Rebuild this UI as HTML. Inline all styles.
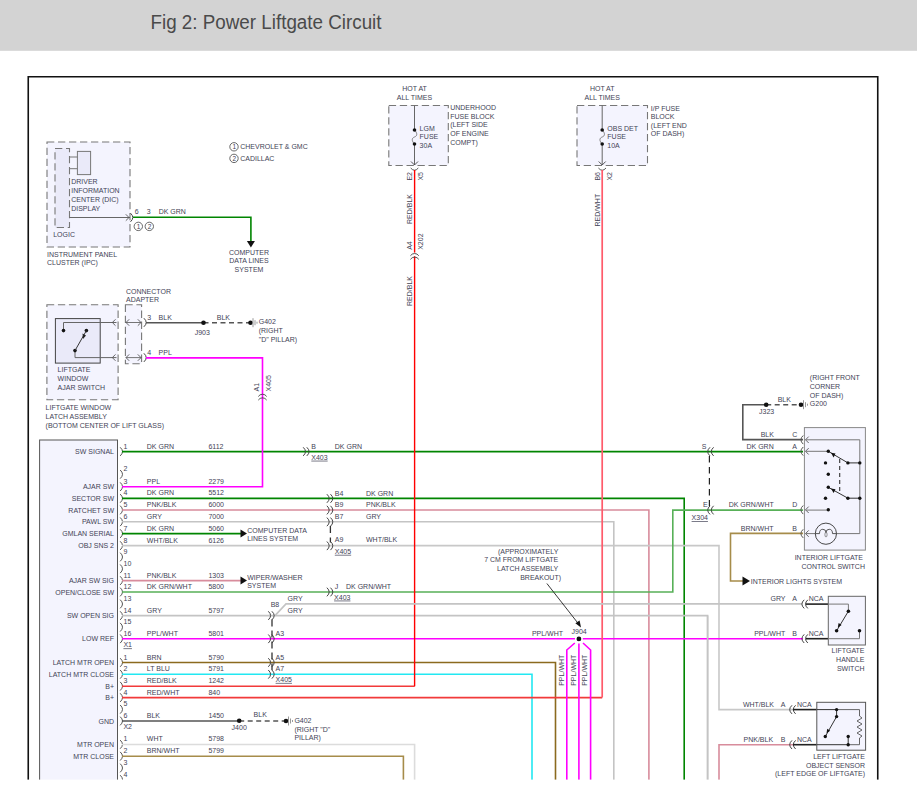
<!DOCTYPE html><html><head><meta charset="utf-8"><style>
html,body{margin:0;padding:0;background:#fff;width:917px;height:801px;overflow:hidden}
svg text{font-family:"Liberation Sans",sans-serif}
</style></head><body>
<svg width="917" height="801" viewBox="0 0 917 801" style="position:absolute;left:0;top:0">
<rect x="0" y="0" width="917" height="801" fill="#fff"/>
<rect x="0" y="0" width="917" height="50.8" fill="#d3d3d3"/>
<text x="150.5" y="29" font-size="20" fill="#4a4a4a" textLength="231" lengthAdjust="spacingAndGlyphs">Fig 2: Power Liftgate Circuit</text>
<path d="M28.25,785 L28.25,76.75 L877.75,76.75 L877.75,785" stroke="#111" stroke-width="1.6" fill="none" />
<rect x="47" y="142" width="83" height="105" fill="#f4f4fe" stroke="#777" stroke-width="1.1" stroke-dasharray="7.3,3.7"/>
<rect x="55" y="148.5" width="14.5" height="79.0" fill="#eaeaf9" stroke="#777" stroke-width="1.1" stroke-dasharray="7.3,3.7"/>
<rect x="77.4" y="151.4" width="13.2" height="23.2" fill="#eaeaf9" stroke="#777" stroke-width="1" />
<line x1="69.5" y1="157" x2="77.4" y2="157" stroke="#777" stroke-width="1" />
<line x1="69.5" y1="168.7" x2="77.4" y2="168.7" stroke="#777" stroke-width="1" />
<text x="71.2" y="184" text-anchor="start" font-size="7" fill="#434356" >DRIVER</text>
<text x="71.2" y="193" text-anchor="start" font-size="7" fill="#434356" >INFORMATION</text>
<text x="71.2" y="202" text-anchor="start" font-size="7" fill="#434356" >CENTER (DIC)</text>
<text x="71.2" y="211" text-anchor="start" font-size="7" fill="#434356" >DISPLAY</text>
<line x1="69.5" y1="217.5" x2="130" y2="217.5" stroke="#666" stroke-width="1" />
<path d="M125.8,214.3 L129,217.5 L125.8,220.7" stroke="#555" stroke-width="0.9" fill="none" />
<path d="M130.5,213.2 Q135.1,217.5 130.5,221.8" stroke="#444" stroke-width="1.0" fill="none" />
<text x="53.2" y="236.7" text-anchor="start" font-size="7" fill="#434356" >LOGIC</text>
<text x="47" y="256.7" text-anchor="start" font-size="7" fill="#434356" >INSTRUMENT PANEL</text>
<text x="47" y="264.7" text-anchor="start" font-size="7" fill="#434356" >CLUSTER (IPC)</text>
<path d="M133,217.3 L250.9,217.3 L250.9,242" stroke="#008500" stroke-width="1.6" fill="none" />
<path d="M246.9,241 L254.9,241 L250.9,247.5 Z" fill="#111"/>
<text x="134.8" y="213.7" text-anchor="start" font-size="7" fill="#434356" >6</text>
<text x="146.7" y="213.7" text-anchor="start" font-size="7" fill="#434356" >3</text>
<text x="158.7" y="213.7" text-anchor="start" font-size="7" fill="#434356" >DK GRN</text>
<circle cx="138.3" cy="226.4" r="4.2" fill="none" stroke="#444" stroke-width="0.8"/>
<text x="138.60000000000002" y="228.8" text-anchor="middle" font-size="6.5" fill="#434356" >1</text>
<circle cx="149.3" cy="226.4" r="4.2" fill="none" stroke="#444" stroke-width="0.8"/>
<text x="149.60000000000002" y="228.8" text-anchor="middle" font-size="6.5" fill="#434356" >2</text>
<text x="249" y="254.5" text-anchor="middle" font-size="7" fill="#434356" >COMPUTER</text>
<text x="249" y="263.1" text-anchor="middle" font-size="7" fill="#434356" >DATA LINES</text>
<text x="249" y="271.7" text-anchor="middle" font-size="7" fill="#434356" >SYSTEM</text>
<circle cx="234" cy="146.8" r="4.2" fill="none" stroke="#444" stroke-width="0.8"/>
<text x="234.3" y="149.20000000000002" text-anchor="middle" font-size="6.5" fill="#434356" >1</text>
<circle cx="234" cy="158.4" r="4.2" fill="none" stroke="#444" stroke-width="0.8"/>
<text x="234.3" y="160.8" text-anchor="middle" font-size="6.5" fill="#434356" >2</text>
<text x="240.2" y="148.6" text-anchor="start" font-size="7" fill="#434356" >CHEVROLET &amp; GMC</text>
<text x="240.2" y="160.6" text-anchor="start" font-size="7" fill="#434356" >CADILLAC</text>
<rect x="388.8" y="105.5" width="59.5" height="60.0" fill="#f4f4fe" stroke="#777" stroke-width="1.1" stroke-dasharray="7.3,3.7"/>
<text x="414.5" y="91.0" text-anchor="middle" font-size="7" fill="#434356" >HOT AT</text>
<text x="414.5" y="99.8" text-anchor="middle" font-size="7" fill="#434356" >ALL TIMES</text>
<path d="M414.5,105.5 L414.5,130 M414.5,144 L414.5,165" stroke="#666" stroke-width="1" fill="none" />
<path d="M414.5,130 C417.5,133 417.5,136 414.5,137 C411.5,138 411.5,141 414.5,144" stroke="#777" stroke-width="0.9" fill="none" />
<circle cx="414.5" cy="130" r="1.8" fill="#111"/>
<circle cx="414.5" cy="144" r="1.8" fill="#111"/>
<path d="M411.0,161.5 L414.5,165 L418.0,161.5" stroke="#444" stroke-width="0.9" fill="none" />
<path d="M410.7,168 Q414.5,172.5 418.3,168" stroke="#444" stroke-width="0.9" fill="none" />
<text x="419.6" y="130.8" text-anchor="start" font-size="7" fill="#434356" >LGM</text>
<text x="419.6" y="139.3" text-anchor="start" font-size="7" fill="#434356" >FUSE</text>
<text x="419.6" y="147.8" text-anchor="start" font-size="7" fill="#434356" >30A</text>
<text x="450.2" y="110.0" text-anchor="start" font-size="7" fill="#434356" >UNDERHOOD</text>
<text x="450.2" y="118.65" text-anchor="start" font-size="7" fill="#434356" >FUSE BLOCK</text>
<text x="450.2" y="127.3" text-anchor="start" font-size="7" fill="#434356" >(LEFT SIDE</text>
<text x="450.2" y="135.95" text-anchor="start" font-size="7" fill="#434356" >OF ENGINE</text>
<text x="450.2" y="144.6" text-anchor="start" font-size="7" fill="#434356" >COMPT)</text>
<rect x="577" y="105.5" width="70.5" height="60.0" fill="#f4f4fe" stroke="#777" stroke-width="1.1" stroke-dasharray="7.3,3.7"/>
<text x="602.2" y="91.0" text-anchor="middle" font-size="7" fill="#434356" >HOT AT</text>
<text x="602.2" y="99.8" text-anchor="middle" font-size="7" fill="#434356" >ALL TIMES</text>
<path d="M602.2,105.5 L602.2,130 M602.2,144 L602.2,165" stroke="#666" stroke-width="1" fill="none" />
<path d="M602.2,130 C605.2,133 605.2,136 602.2,137 C599.2,138 599.2,141 602.2,144" stroke="#777" stroke-width="0.9" fill="none" />
<circle cx="602.2" cy="130" r="1.8" fill="#111"/>
<circle cx="602.2" cy="144" r="1.8" fill="#111"/>
<path d="M598.7,161.5 L602.2,165 L605.7,161.5" stroke="#444" stroke-width="0.9" fill="none" />
<path d="M598.4000000000001,168 Q602.2,172.5 606.0,168" stroke="#444" stroke-width="0.9" fill="none" />
<text x="607.3000000000001" y="130.8" text-anchor="start" font-size="7" fill="#434356" >OBS DET</text>
<text x="607.3000000000001" y="139.3" text-anchor="start" font-size="7" fill="#434356" >FUSE</text>
<text x="607.3000000000001" y="147.8" text-anchor="start" font-size="7" fill="#434356" >10A</text>
<text x="650.8" y="110.5" text-anchor="start" font-size="7" fill="#434356" >I/P FUSE</text>
<text x="650.8" y="119.15" text-anchor="start" font-size="7" fill="#434356" >BLOCK</text>
<text x="650.8" y="127.8" text-anchor="start" font-size="7" fill="#434356" >(LEFT END</text>
<text x="650.8" y="136.45" text-anchor="start" font-size="7" fill="#434356" >OF DASH)</text>
<rect x="46.9" y="304.8" width="71.2" height="94.9" fill="#f4f4fe" stroke="#777" stroke-width="1.1" stroke-dasharray="7.3,3.7"/>
<rect x="55.4" y="318.6" width="44.8" height="44.5" fill="#eaeaf9" stroke="#444" stroke-width="1" />
<path d="M63.5,330.6 L63.5,322.5 L116.5,322.5" stroke="#666" stroke-width="1" fill="none" />
<path d="M75,350.6 L75,357.6 L116.5,357.6" stroke="#666" stroke-width="1" fill="none" />
<circle cx="63.5" cy="330.6" r="1.8" fill="#111"/>
<circle cx="86.4" cy="330.6" r="1.8" fill="#111"/>
<circle cx="75" cy="350.6" r="1.8" fill="#111"/>
<path d="M75,350.6 L86.4,330.6" stroke="#333" stroke-width="1" fill="none" />
<path d="M82.5,333.5 L86,335.5 L83,339 Z" fill="#222"/>
<path d="M115.5,319.3 L112.3,322.5 L115.5,325.7" stroke="#555" stroke-width="0.9" fill="none" />
<path d="M115.5,354.40000000000003 L112.3,357.6 L115.5,360.8" stroke="#555" stroke-width="0.9" fill="none" />
<text x="57.6" y="371.8" text-anchor="start" font-size="7" fill="#434356" >LIFTGATE</text>
<text x="57.6" y="380.65" text-anchor="start" font-size="7" fill="#434356" >WINDOW</text>
<text x="57.6" y="389.5" text-anchor="start" font-size="7" fill="#434356" >AJAR SWITCH</text>
<text x="45.6" y="409.8" text-anchor="start" font-size="7" fill="#434356" >LIFTGATE WINDOW</text>
<text x="45.6" y="418.9" text-anchor="start" font-size="7" fill="#434356" >LATCH ASSEMBLY</text>
<text x="45.6" y="428.0" text-anchor="start" font-size="7" fill="#434356" >(BOTTOM CENTER OF LIFT GLASS)</text>
<rect x="125.4" y="304.8" width="16.2" height="58.9" fill="#f4f4fe" stroke="#777" stroke-width="1.1" stroke-dasharray="7.3,3.7"/>
<line x1="126" y1="322.5" x2="141" y2="322.5" stroke="#666" stroke-width="0.9" />
<path d="M129.2,319.3 L126,322.5 L129.2,325.7" stroke="#555" stroke-width="0.9" fill="none" />
<path d="M137.8,319.3 L141,322.5 L137.8,325.7" stroke="#555" stroke-width="0.9" fill="none" />
<path d="M143.9,318.2 Q148.5,322.5 143.9,326.8" stroke="#444" stroke-width="1.0" fill="none" />
<line x1="126" y1="357.6" x2="141" y2="357.6" stroke="#666" stroke-width="0.9" />
<path d="M129.2,354.40000000000003 L126,357.6 L129.2,360.8" stroke="#555" stroke-width="0.9" fill="none" />
<path d="M137.8,354.40000000000003 L141,357.6 L137.8,360.8" stroke="#555" stroke-width="0.9" fill="none" />
<path d="M143.9,353.3 Q148.5,357.6 143.9,361.90000000000003" stroke="#444" stroke-width="1.0" fill="none" />
<text x="126" y="293.7" text-anchor="start" font-size="7" fill="#434356" >CONNECTOR</text>
<text x="126" y="302.0" text-anchor="start" font-size="7" fill="#434356" >ADAPTER</text>
<line x1="146" y1="322.7" x2="203.5" y2="322.7" stroke="#555" stroke-width="1.6" />
<line x1="203.5" y1="322.7" x2="250.5" y2="322.7" stroke="#555" stroke-width="1.6" stroke-dasharray="5,3.5"/>
<circle cx="203.5" cy="322.7" r="2.3" fill="#111"/>
<circle cx="250.5" cy="322.7" r="2.3" fill="#111"/>
<line x1="253" y1="318.2" x2="253" y2="327.2" stroke="#999" stroke-width="1" />
<line x1="255" y1="320.2" x2="255" y2="325.2" stroke="#999" stroke-width="1" />
<line x1="257" y1="321.7" x2="257" y2="323.7" stroke="#999" stroke-width="1" />
<text x="147.3" y="319.9" text-anchor="start" font-size="7" fill="#434356" >3</text>
<text x="158.6" y="319.7" text-anchor="start" font-size="7" fill="#434356" >BLK</text>
<text x="202.3" y="334.8" text-anchor="middle" font-size="7" fill="#434356" >J903</text>
<text x="216.8" y="319.7" text-anchor="start" font-size="7" fill="#434356" >BLK</text>
<text x="258.7" y="324.0" text-anchor="start" font-size="7" fill="#434356" >G402</text>
<text x="258.7" y="332.8" text-anchor="start" font-size="7" fill="#434356" >(RIGHT</text>
<text x="258.7" y="341.6" text-anchor="start" font-size="7" fill="#434356" >&quot;D&quot; PILLAR)</text>
<text x="147.3" y="354.6" text-anchor="start" font-size="7" fill="#434356" >4</text>
<text x="158.6" y="354.8" text-anchor="start" font-size="7" fill="#434356" >PPL</text>
<rect x="39.6" y="440" width="77.9" height="360" fill="#f4f4fe" stroke="#555" stroke-width="1" />
<text x="114" y="454.1" text-anchor="end" font-size="7" fill="#434356" >SW SIGNAL</text>
<text x="123.6" y="448.6" text-anchor="start" font-size="7" fill="#434356" >1</text>
<path d="M120.2,447.3 Q124.8,451.6 120.2,455.90000000000003" stroke="#555" stroke-width="1.0" fill="none" />
<path d="M122,451.6 L803,451.6" stroke="#008500" stroke-width="1.6" fill="none" />
<text x="146.8" y="448.6" text-anchor="start" font-size="7" fill="#434356" >DK GRN</text>
<text x="208.4" y="448.6" text-anchor="start" font-size="7" fill="#434356" >6112</text>
<text x="123.6" y="471.3" text-anchor="start" font-size="7" fill="#434356" >2</text>
<path d="M120.2,470.0 Q124.8,474.3 120.2,478.6" stroke="#555" stroke-width="1.0" fill="none" />
<text x="114" y="489.2" text-anchor="end" font-size="7" fill="#434356" >AJAR SW</text>
<text x="123.6" y="483.7" text-anchor="start" font-size="7" fill="#434356" >3</text>
<path d="M120.2,482.4 Q124.8,486.7 120.2,491.0" stroke="#555" stroke-width="1.0" fill="none" />
<path d="M122,486.7 L262.5,486.7 L262.5,357.9 L146,357.9" stroke="#ff00ff" stroke-width="1.6" fill="none" />
<text x="146.8" y="483.7" text-anchor="start" font-size="7" fill="#434356" >PPL</text>
<text x="208.4" y="483.7" text-anchor="start" font-size="7" fill="#434356" >2279</text>
<text x="114" y="500.9" text-anchor="end" font-size="7" fill="#434356" >SECTOR SW</text>
<text x="123.6" y="495.4" text-anchor="start" font-size="7" fill="#434356" >4</text>
<path d="M120.2,494.09999999999997 Q124.8,498.4 120.2,502.7" stroke="#555" stroke-width="1.0" fill="none" />
<path d="M122,498.4 L684.2,498.4 L684.2,800" stroke="#008500" stroke-width="1.6" fill="none" />
<text x="146.8" y="495.4" text-anchor="start" font-size="7" fill="#434356" >DK GRN</text>
<text x="208.4" y="495.4" text-anchor="start" font-size="7" fill="#434356" >5512</text>
<text x="114" y="512.5" text-anchor="end" font-size="7" fill="#434356" >RATCHET SW</text>
<text x="123.6" y="507.0" text-anchor="start" font-size="7" fill="#434356" >5</text>
<path d="M120.2,505.7 Q124.8,510.0 120.2,514.3" stroke="#555" stroke-width="1.0" fill="none" />
<path d="M122,510.0 L648.9,510.0 L648.9,800" stroke="#d88c9c" stroke-width="1.6" fill="none" />
<text x="146.8" y="507.0" text-anchor="start" font-size="7" fill="#434356" >PNK/BLK</text>
<text x="208.4" y="507.0" text-anchor="start" font-size="7" fill="#434356" >6000</text>
<text x="114" y="524.3" text-anchor="end" font-size="7" fill="#434356" >PAWL SW</text>
<text x="123.6" y="518.8" text-anchor="start" font-size="7" fill="#434356" >6</text>
<path d="M120.2,517.5 Q124.8,521.8 120.2,526.0999999999999" stroke="#555" stroke-width="1.0" fill="none" />
<path d="M122,521.8 L613.8,521.8 L613.8,800" stroke="#c4c4c4" stroke-width="1.6" fill="none" />
<text x="146.8" y="518.8" text-anchor="start" font-size="7" fill="#434356" >GRY</text>
<text x="208.4" y="518.8" text-anchor="start" font-size="7" fill="#434356" >7000</text>
<text x="114" y="536.1" text-anchor="end" font-size="7" fill="#434356" >GMLAN SERIAL</text>
<text x="123.6" y="530.6" text-anchor="start" font-size="7" fill="#434356" >7</text>
<path d="M120.2,529.3000000000001 Q124.8,533.6 120.2,537.9" stroke="#555" stroke-width="1.0" fill="none" />
<path d="M122,533.6 L241,533.6" stroke="#008500" stroke-width="1.6" fill="none" />
<text x="146.8" y="530.6" text-anchor="start" font-size="7" fill="#434356" >DK GRN</text>
<text x="208.4" y="530.6" text-anchor="start" font-size="7" fill="#434356" >5060</text>
<text x="114" y="548.1" text-anchor="end" font-size="7" fill="#434356" >OBJ SNS 2</text>
<text x="123.6" y="542.6" text-anchor="start" font-size="7" fill="#434356" >8</text>
<path d="M120.2,541.3000000000001 Q124.8,545.6 120.2,549.9" stroke="#555" stroke-width="1.0" fill="none" />
<path d="M122,545.6 L719,545.6 L719,709.6 L793,709.6" stroke="#c8c8c8" stroke-width="1.6" fill="none" />
<text x="146.8" y="542.6" text-anchor="start" font-size="7" fill="#434356" >WHT/BLK</text>
<text x="208.4" y="542.6" text-anchor="start" font-size="7" fill="#434356" >6126</text>
<text x="123.6" y="554.0" text-anchor="start" font-size="7" fill="#434356" >9</text>
<path d="M120.2,552.7 Q124.8,557.0 120.2,561.3" stroke="#555" stroke-width="1.0" fill="none" />
<text x="123.6" y="565.8" text-anchor="start" font-size="7" fill="#434356" >10</text>
<path d="M120.2,564.5 Q124.8,568.8 120.2,573.0999999999999" stroke="#555" stroke-width="1.0" fill="none" />
<text x="114" y="583.1" text-anchor="end" font-size="7" fill="#434356" >AJAR SW SIG</text>
<text x="123.6" y="577.6" text-anchor="start" font-size="7" fill="#434356" >11</text>
<path d="M120.2,576.3000000000001 Q124.8,580.6 120.2,584.9" stroke="#555" stroke-width="1.0" fill="none" />
<path d="M122,580.6 L241,580.6" stroke="#d88c9c" stroke-width="1.6" fill="none" />
<text x="146.8" y="577.6" text-anchor="start" font-size="7" fill="#434356" >PNK/BLK</text>
<text x="208.4" y="577.6" text-anchor="start" font-size="7" fill="#434356" >1303</text>
<text x="114" y="594.5" text-anchor="end" font-size="7" fill="#434356" >OPEN/CLOSE SW</text>
<text x="123.6" y="589.0" text-anchor="start" font-size="7" fill="#434356" >12</text>
<path d="M120.2,587.7 Q124.8,592.0 120.2,596.3" stroke="#555" stroke-width="1.0" fill="none" />
<path d="M122,592.0 L672.8,592.0 L672.8,510.1 L803,510.1" stroke="#58b058" stroke-width="1.6" fill="none" />
<text x="146.8" y="589.0" text-anchor="start" font-size="7" fill="#434356" >DK GRN/WHT</text>
<text x="208.4" y="589.0" text-anchor="start" font-size="7" fill="#434356" >5800</text>
<text x="123.6" y="601.0" text-anchor="start" font-size="7" fill="#434356" >13</text>
<path d="M120.2,599.7 Q124.8,604.0 120.2,608.3" stroke="#555" stroke-width="1.0" fill="none" />
<text x="114" y="618.1" text-anchor="end" font-size="7" fill="#434356" >SW OPEN SIG</text>
<text x="123.6" y="612.6" text-anchor="start" font-size="7" fill="#434356" >14</text>
<path d="M120.2,611.3000000000001 Q124.8,615.6 120.2,619.9" stroke="#555" stroke-width="1.0" fill="none" />
<path d="M122,615.6 L707.6,615.6 L707.6,800" stroke="#c4c4c4" stroke-width="1.6" fill="none" />
<text x="146.8" y="612.6" text-anchor="start" font-size="7" fill="#434356" >GRY</text>
<text x="208.4" y="612.6" text-anchor="start" font-size="7" fill="#434356" >5797</text>
<text x="123.6" y="624.2" text-anchor="start" font-size="7" fill="#434356" >15</text>
<path d="M120.2,622.9000000000001 Q124.8,627.2 120.2,631.5" stroke="#555" stroke-width="1.0" fill="none" />
<text x="114" y="641.3" text-anchor="end" font-size="7" fill="#434356" >LOW REF</text>
<text x="123.6" y="635.8" text-anchor="start" font-size="7" fill="#434356" >16</text>
<path d="M120.2,634.5 Q124.8,638.8 120.2,643.0999999999999" stroke="#555" stroke-width="1.0" fill="none" />
<path d="M122,638.8 L803,638.8" stroke="#ff00ff" stroke-width="1.6" fill="none" />
<text x="146.8" y="635.8" text-anchor="start" font-size="7" fill="#434356" >PPL/WHT</text>
<text x="208.4" y="635.8" text-anchor="start" font-size="7" fill="#434356" >5801</text>
<text x="114" y="665.0" text-anchor="end" font-size="7" fill="#434356" >LATCH MTR OPEN</text>
<text x="123.6" y="659.5" text-anchor="start" font-size="7" fill="#434356" >1</text>
<path d="M120.2,658.2 Q124.8,662.5 120.2,666.8" stroke="#555" stroke-width="1.0" fill="none" />
<path d="M122,662.5 L555.5,662.5 L555.5,800" stroke="#8b6a1e" stroke-width="1.6" fill="none" />
<text x="146.8" y="659.5" text-anchor="start" font-size="7" fill="#434356" >BRN</text>
<text x="208.4" y="659.5" text-anchor="start" font-size="7" fill="#434356" >5790</text>
<text x="114" y="676.8" text-anchor="end" font-size="7" fill="#434356" >LATCH MTR CLOSE</text>
<text x="123.6" y="671.3" text-anchor="start" font-size="7" fill="#434356" >2</text>
<path d="M120.2,670.0 Q124.8,674.3 120.2,678.5999999999999" stroke="#555" stroke-width="1.0" fill="none" />
<path d="M122,674.3 L532,674.3 L532,800" stroke="#22e8f2" stroke-width="1.6" fill="none" />
<text x="146.8" y="671.3" text-anchor="start" font-size="7" fill="#434356" >LT BLU</text>
<text x="208.4" y="671.3" text-anchor="start" font-size="7" fill="#434356" >5791</text>
<text x="114" y="688.7" text-anchor="end" font-size="7" fill="#434356" >B+</text>
<text x="123.6" y="683.2" text-anchor="start" font-size="7" fill="#434356" >3</text>
<path d="M120.2,681.9000000000001 Q124.8,686.2 120.2,690.5" stroke="#555" stroke-width="1.0" fill="none" />
<path d="M122,686.2 L414.7,686.2" stroke="#f23a3a" stroke-width="1.6" fill="none" />
<text x="146.8" y="683.2" text-anchor="start" font-size="7" fill="#434356" >RED/BLK</text>
<text x="208.4" y="683.2" text-anchor="start" font-size="7" fill="#434356" >1242</text>
<text x="114" y="700.1" text-anchor="end" font-size="7" fill="#434356" >B+</text>
<text x="123.6" y="694.6" text-anchor="start" font-size="7" fill="#434356" >4</text>
<path d="M120.2,693.3000000000001 Q124.8,697.6 120.2,701.9" stroke="#555" stroke-width="1.0" fill="none" />
<path d="M122,697.6 L602.2,697.6" stroke="#f23a3a" stroke-width="1.6" fill="none" />
<text x="146.8" y="694.6" text-anchor="start" font-size="7" fill="#434356" >RED/WHT</text>
<text x="208.4" y="694.6" text-anchor="start" font-size="7" fill="#434356" >840</text>
<text x="123.6" y="706.3" text-anchor="start" font-size="7" fill="#434356" >5</text>
<path d="M120.2,705.0 Q124.8,709.3 120.2,713.5999999999999" stroke="#555" stroke-width="1.0" fill="none" />
<text x="114" y="723.5" text-anchor="end" font-size="7" fill="#434356" >GND</text>
<text x="123.6" y="718.0" text-anchor="start" font-size="7" fill="#434356" >6</text>
<path d="M120.2,716.7 Q124.8,721.0 120.2,725.3" stroke="#555" stroke-width="1.0" fill="none" />
<path d="M122,721 L239.2,721" stroke="#555" stroke-width="1.6" fill="none" />
<text x="146.8" y="718.0" text-anchor="start" font-size="7" fill="#434356" >BLK</text>
<text x="208.4" y="718.0" text-anchor="start" font-size="7" fill="#434356" >1450</text>
<text x="114" y="746.9" text-anchor="end" font-size="7" fill="#434356" >MTR OPEN</text>
<text x="123.6" y="741.4" text-anchor="start" font-size="7" fill="#434356" >1</text>
<path d="M120.2,740.1 Q124.8,744.4 120.2,748.6999999999999" stroke="#555" stroke-width="1.0" fill="none" />
<path d="M122,744.5 L414.6,744.5 L414.6,800" stroke="#dcdcdc" stroke-width="1.6" fill="none" />
<text x="146.8" y="741.4" text-anchor="start" font-size="7" fill="#434356" >WHT</text>
<text x="208.4" y="741.4" text-anchor="start" font-size="7" fill="#434356" >5798</text>
<text x="114" y="758.7" text-anchor="end" font-size="7" fill="#434356" >MTR CLOSE</text>
<text x="123.6" y="753.2" text-anchor="start" font-size="7" fill="#434356" >2</text>
<path d="M120.2,751.9000000000001 Q124.8,756.2 120.2,760.5" stroke="#555" stroke-width="1.0" fill="none" />
<path d="M122,756.2 L403.4,756.2 L403.4,800" stroke="#a68c4a" stroke-width="1.6" fill="none" />
<text x="146.8" y="753.2" text-anchor="start" font-size="7" fill="#434356" >BRN/WHT</text>
<text x="208.4" y="753.2" text-anchor="start" font-size="7" fill="#434356" >5799</text>
<text x="123.6" y="765.0" text-anchor="start" font-size="7" fill="#434356" >3</text>
<path d="M120.2,763.7 Q124.8,768.0 120.2,772.3" stroke="#555" stroke-width="1.0" fill="none" />
<text x="123.6" y="776.5" text-anchor="start" font-size="7" fill="#434356" >4</text>
<path d="M120.2,775.2 Q124.8,779.5 120.2,783.8" stroke="#555" stroke-width="1.0" fill="none" />
<text x="123.4" y="647.4" text-anchor="start" font-size="7" fill="#434356" text-decoration="underline">X1</text>
<text x="123.4" y="729.1" text-anchor="start" font-size="7" fill="#434356" >X2</text>
<path d="M414.6,170 L414.6,252.6" stroke="#ff0000" stroke-width="1.4" fill="none" />
<path d="M414.6,256.3 L414.6,686.2" stroke="#ff0000" stroke-width="1.4" fill="none" />
<path d="M410.40000000000003,255.8 A5,5 0 0 1 418.8,255.8" stroke="#444" stroke-width="0.9" fill="none" />
<path d="M410.40000000000003,259.40000000000003 A5,5 0 0 1 418.8,259.40000000000003" stroke="#444" stroke-width="0.9" fill="none" />
<text transform="translate(412,180.6) rotate(-90)" text-anchor="start" font-size="7" fill="#434356">E2</text>
<text transform="translate(423,180.6) rotate(-90)" text-anchor="start" font-size="7" fill="#434356">X5</text>
<text transform="translate(412,224) rotate(-90)" text-anchor="start" font-size="7" fill="#434356">RED/BLK</text>
<text transform="translate(412,249.8) rotate(-90)" text-anchor="start" font-size="7" fill="#434356">A4</text>
<text transform="translate(423,249.8) rotate(-90)" text-anchor="start" font-size="7" fill="#434356">X202</text>
<text transform="translate(412,306) rotate(-90)" text-anchor="start" font-size="7" fill="#434356">RED/BLK</text>
<path d="M602.2,170 L602.2,697.6" stroke="#ff5a6a" stroke-width="1.7" fill="none" />
<text transform="translate(599.6,180.6) rotate(-90)" text-anchor="start" font-size="7" fill="#434356">B6</text>
<text transform="translate(611.5,180.6) rotate(-90)" text-anchor="start" font-size="7" fill="#434356">X2</text>
<text transform="translate(599.6,226.5) rotate(-90)" text-anchor="start" font-size="7" fill="#434356">RED/WHT</text>
<path d="M258.3,396.5 A5,5 0 0 1 266.7,396.5" stroke="#444" stroke-width="0.9" fill="none" />
<path d="M258.3,400.1 A5,5 0 0 1 266.7,400.1" stroke="#444" stroke-width="0.9" fill="none" />
<text transform="translate(258.6,391.5) rotate(-90)" text-anchor="start" font-size="7" fill="#434356">A1</text>
<text transform="translate(271.4,391.5) rotate(-90)" text-anchor="start" font-size="7" fill="#434356">X405</text>
<path d="M303.2,447.3 Q307.8,451.6 303.2,455.90000000000003" stroke="#444" stroke-width="1.0" fill="none" />
<path d="M306.8,447.3 Q311.40000000000003,451.6 306.8,455.90000000000003" stroke="#444" stroke-width="1.0" fill="none" />
<text x="311.3" y="448.7" text-anchor="start" font-size="7" fill="#434356" >B</text>
<text x="334.8" y="448.7" text-anchor="start" font-size="7" fill="#434356" >DK GRN</text>
<text x="311.3" y="459.7" text-anchor="start" font-size="7" fill="#434356" text-decoration="underline">X403</text>
<path d="M326.9,494.2 Q331.5,498.5 326.9,502.8" stroke="#444" stroke-width="1.0" fill="none" />
<path d="M330.5,494.2 Q335.1,498.5 330.5,502.8" stroke="#444" stroke-width="1.0" fill="none" />
<path d="M326.9,505.8 Q331.5,510.1 326.9,514.4" stroke="#444" stroke-width="1.0" fill="none" />
<path d="M330.5,505.8 Q335.1,510.1 330.5,514.4" stroke="#444" stroke-width="1.0" fill="none" />
<path d="M326.9,517.6 Q331.5,521.9 326.9,526.1999999999999" stroke="#444" stroke-width="1.0" fill="none" />
<path d="M330.5,517.6 Q335.1,521.9 330.5,526.1999999999999" stroke="#444" stroke-width="1.0" fill="none" />
<path d="M326.9,541.5 Q331.5,545.8 326.9,550.0999999999999" stroke="#444" stroke-width="1.0" fill="none" />
<path d="M330.5,541.5 Q335.1,545.8 330.5,550.0999999999999" stroke="#444" stroke-width="1.0" fill="none" />
<line x1="330.4" y1="526" x2="330.4" y2="542.5" stroke="#333" stroke-width="1.3" stroke-dasharray="7,4.5"/>
<text x="334.8" y="495.5" text-anchor="start" font-size="7" fill="#434356" >B4</text>
<text x="366" y="495.5" text-anchor="start" font-size="7" fill="#434356" >DK GRN</text>
<text x="334.8" y="506.8" text-anchor="start" font-size="7" fill="#434356" >B9</text>
<text x="366" y="506.8" text-anchor="start" font-size="7" fill="#434356" >PNK/BLK</text>
<text x="334.8" y="518.6" text-anchor="start" font-size="7" fill="#434356" >B7</text>
<text x="366" y="518.6" text-anchor="start" font-size="7" fill="#434356" >GRY</text>
<text x="334.8" y="541.9" text-anchor="start" font-size="7" fill="#434356" >A9</text>
<text x="366" y="541.9" text-anchor="start" font-size="7" fill="#434356" >WHT/BLK</text>
<text x="334.8" y="553.8" text-anchor="start" font-size="7" fill="#434356" text-decoration="underline">X405</text>
<path d="M240.5,529.6 L247,533.6 L240.5,537.6 Z" fill="#111"/>
<text x="247.2" y="532.9" text-anchor="start" font-size="7" fill="#434356" >COMPUTER DATA</text>
<text x="247.2" y="541.0" text-anchor="start" font-size="7" fill="#434356" >LINES SYSTEM</text>
<path d="M240.5,576.6 L247,580.6 L240.5,584.6 Z" fill="#111"/>
<text x="247.2" y="580.2" text-anchor="start" font-size="7" fill="#434356" >WIPER/WASHER</text>
<text x="247.2" y="588.1" text-anchor="start" font-size="7" fill="#434356" >SYSTEM</text>
<path d="M326.9,587.7 Q331.5,592.0 326.9,596.3" stroke="#444" stroke-width="1.0" fill="none" />
<path d="M330.5,587.7 Q335.1,592.0 330.5,596.3" stroke="#444" stroke-width="1.0" fill="none" />
<text x="334.8" y="588.5" text-anchor="start" font-size="7" fill="#434356" >J</text>
<text x="346" y="588.5" text-anchor="start" font-size="7" fill="#434356" >DK GRN/WHT</text>
<text x="334.1" y="599.6" text-anchor="start" font-size="7" fill="#434356" text-decoration="underline">X403</text>
<path d="M275,615.6 L286,603.9 L802,603.9" stroke="#c4c4c4" stroke-width="1.6" fill="none" />
<path d="M707.6,615.6 L707.6,800" stroke="#c4c4c4" stroke-width="1.6" fill="none" />
<path d="M268.3,611.3000000000001 Q272.90000000000003,615.6 268.3,619.9" stroke="#444" stroke-width="1.0" fill="none" />
<path d="M271.90000000000003,611.3000000000001 Q276.50000000000006,615.6 271.90000000000003,619.9" stroke="#444" stroke-width="1.0" fill="none" />
<path d="M268.3,634.5 Q272.90000000000003,638.8 268.3,643.0999999999999" stroke="#444" stroke-width="1.0" fill="none" />
<path d="M271.90000000000003,634.5 Q276.50000000000006,638.8 271.90000000000003,643.0999999999999" stroke="#444" stroke-width="1.0" fill="none" />
<path d="M268.3,658.2 Q272.90000000000003,662.5 268.3,666.8" stroke="#444" stroke-width="1.0" fill="none" />
<path d="M271.90000000000003,658.2 Q276.50000000000006,662.5 271.90000000000003,666.8" stroke="#444" stroke-width="1.0" fill="none" />
<path d="M268.3,670.0 Q272.90000000000003,674.3 268.3,678.5999999999999" stroke="#444" stroke-width="1.0" fill="none" />
<path d="M271.90000000000003,670.0 Q276.50000000000006,674.3 271.90000000000003,678.5999999999999" stroke="#444" stroke-width="1.0" fill="none" />
<line x1="272" y1="619.5" x2="272" y2="670" stroke="#333" stroke-width="1.3" stroke-dasharray="7,4"/>
<text x="270.7" y="606.7" text-anchor="start" font-size="7" fill="#434356" >B8</text>
<text x="287.6" y="600.8" text-anchor="start" font-size="7" fill="#434356" >GRY</text>
<text x="287.6" y="612.6" text-anchor="start" font-size="7" fill="#434356" >GRY</text>
<text x="275.6" y="635.5" text-anchor="start" font-size="7" fill="#434356" >A3</text>
<text x="275.6" y="659.7" text-anchor="start" font-size="7" fill="#434356" >A5</text>
<text x="275.6" y="670.5" text-anchor="start" font-size="7" fill="#434356" >A7</text>
<text x="275.6" y="681.9" text-anchor="start" font-size="7" fill="#434356" text-decoration="underline">X405</text>
<line x1="239.2" y1="721" x2="286" y2="721" stroke="#555" stroke-width="1.6" stroke-dasharray="5,3.5"/>
<circle cx="239.2" cy="720.8" r="2.3" fill="#111"/>
<circle cx="286" cy="721" r="2.3" fill="#111"/>
<line x1="288.5" y1="716.5" x2="288.5" y2="725.5" stroke="#999" stroke-width="1" />
<line x1="290.5" y1="718.5" x2="290.5" y2="723.5" stroke="#999" stroke-width="1" />
<line x1="292.5" y1="720" x2="292.5" y2="722" stroke="#999" stroke-width="1" />
<text x="253.6" y="717.1" text-anchor="start" font-size="7" fill="#434356" >BLK</text>
<text x="239.2" y="729.6" text-anchor="middle" font-size="7" fill="#434356" >J400</text>
<text x="294.4" y="722.9" text-anchor="start" font-size="7" fill="#434356" >G402</text>
<text x="294.4" y="731.65" text-anchor="start" font-size="7" fill="#434356" >(RIGHT &quot;D&quot;</text>
<text x="294.4" y="740.4" text-anchor="start" font-size="7" fill="#434356" >PILLAR)</text>
<path d="M574.8,643 L566.8,650 L566.8,800" stroke="#ff00ff" stroke-width="1.6" fill="none" />
<path d="M578.9,643.5 L578.9,800" stroke="#ff00ff" stroke-width="1.6" fill="none" />
<path d="M583,643 L590.6,650 L590.6,800" stroke="#ff00ff" stroke-width="1.6" fill="none" />
<circle cx="578.9" cy="638.9" r="4" fill="#fff"/>
<circle cx="578.9" cy="638.9" r="2.4" fill="#111"/>
<text x="531.9" y="635.5" text-anchor="start" font-size="7" fill="#434356" >PPL/WHT</text>
<text x="571.5" y="633.9" text-anchor="start" font-size="7" fill="#434356" >J904</text>
<text transform="translate(564.3,685.8) rotate(-90)" text-anchor="start" font-size="7" fill="#434356">PPL/WHT</text>
<text transform="translate(576.3,685.8) rotate(-90)" text-anchor="start" font-size="7" fill="#434356">PPL/WHT</text>
<text transform="translate(587.3,685.8) rotate(-90)" text-anchor="start" font-size="7" fill="#434356">PPL/WHT</text>
<text x="558.3" y="553.6" text-anchor="end" font-size="7" fill="#434356" >(APPROXIMATELY</text>
<text x="558.3" y="562" text-anchor="end" font-size="7" fill="#434356" >7 CM FROM LIFTGATE</text>
<text x="558.3" y="570.8" text-anchor="end" font-size="7" fill="#434356" >LATCH ASSEMBLY</text>
<text x="561" y="579.8" text-anchor="end" font-size="7" fill="#434356" >BREAKOUT)</text>
<line x1="546.9" y1="583.5" x2="579" y2="624.5" stroke="#222" stroke-width="0.9" />
<path d="M581,627.5 L575.4,623.3 L579.6,620.6 Z" fill="#111"/>
<path d="M803,439.6 L742.8,439.6 L742.8,404.7 L766.2,404.7" stroke="#555" stroke-width="1.6" fill="none" />
<line x1="766.2" y1="404.7" x2="801" y2="404.7" stroke="#555" stroke-width="1.6" stroke-dasharray="5,3.5"/>
<circle cx="766.2" cy="404.7" r="2.3" fill="#111"/>
<circle cx="801" cy="404.7" r="2.3" fill="#111"/>
<line x1="803.5" y1="400.2" x2="803.5" y2="409.2" stroke="#999" stroke-width="1" />
<line x1="805.5" y1="402.2" x2="805.5" y2="407.2" stroke="#999" stroke-width="1" />
<line x1="807.5" y1="403.7" x2="807.5" y2="405.7" stroke="#999" stroke-width="1" />
<text x="809.8" y="406.4" text-anchor="start" font-size="7" fill="#434356" >G200</text>
<text x="809.8" y="379.8" text-anchor="start" font-size="7" fill="#434356" >(RIGHT FRONT</text>
<text x="809.8" y="388.75" text-anchor="start" font-size="7" fill="#434356" >CORNER</text>
<text x="809.8" y="397.7" text-anchor="start" font-size="7" fill="#434356" >OF DASH)</text>
<text x="777.7" y="401.6" text-anchor="start" font-size="7" fill="#434356" >BLK</text>
<text x="759" y="414" text-anchor="start" font-size="7" fill="#434356" >J323</text>
<text x="760.7" y="436.5" text-anchor="start" font-size="7" fill="#434356" >BLK</text>
<text x="792.3" y="436.5" text-anchor="start" font-size="7" fill="#434356" >C</text>
<text x="746.5" y="448.5" text-anchor="start" font-size="7" fill="#434356" >DK GRN</text>
<text x="792.3" y="448.5" text-anchor="start" font-size="7" fill="#434356" >A</text>
<path d="M710.0,447.3 Q705.4,451.6 710.0,455.90000000000003" stroke="#444" stroke-width="1.0" fill="none" />
<path d="M713.6,447.3 Q709.0,451.6 713.6,455.90000000000003" stroke="#444" stroke-width="1.0" fill="none" />
<text x="701.8" y="448.5" text-anchor="start" font-size="7" fill="#434356" >S</text>
<line x1="709.4" y1="456" x2="709.4" y2="506" stroke="#222" stroke-width="1.2" stroke-dasharray="6.5,4.5"/>
<path d="M710.0,505.8 Q705.4,510.1 710.0,514.4" stroke="#444" stroke-width="1.0" fill="none" />
<path d="M713.6,505.8 Q709.0,510.1 713.6,514.4" stroke="#444" stroke-width="1.0" fill="none" />
<text x="703" y="506.6" text-anchor="start" font-size="7" fill="#434356" >E</text>
<text x="691.6" y="520" text-anchor="start" font-size="7" fill="#434356" text-decoration="underline">X304</text>
<text x="728.7" y="506.6" text-anchor="start" font-size="7" fill="#434356" >DK GRN/WHT</text>
<text x="792.3" y="506.6" text-anchor="start" font-size="7" fill="#434356" >D</text>
<path d="M803,533.4 L730.5,533.4 L730.5,581 L743,581" stroke="#a68c4a" stroke-width="1.6" fill="none" />
<path d="M742.5,576.5 L750,581 L742.5,585.5 Z" fill="#111"/>
<text x="750.7" y="584" text-anchor="start" font-size="7" fill="#434356" >INTERIOR LIGHTS SYSTEM</text>
<text x="740.8" y="530.8" text-anchor="start" font-size="7" fill="#434356" >BRN/WHT</text>
<text x="792.3" y="530.8" text-anchor="start" font-size="7" fill="#434356" >B</text>
<rect x="804.4" y="427.6" width="61.0" height="122.5" fill="#f4f4fe" stroke="#888" stroke-width="1" />
<path d="M803.2,435.5 Q798.6,439.8 803.2,444.1" stroke="#555" stroke-width="1.0" fill="none" />
<path d="M808.7,436.6 L805.5,439.8 L808.7,443.0" stroke="#555" stroke-width="0.9" fill="none" />
<path d="M803.2,447.0 Q798.6,451.3 803.2,455.6" stroke="#555" stroke-width="1.0" fill="none" />
<path d="M808.7,448.1 L805.5,451.3 L808.7,454.5" stroke="#555" stroke-width="0.9" fill="none" />
<path d="M803.2,505.5 Q798.6,509.8 803.2,514.1" stroke="#555" stroke-width="1.0" fill="none" />
<path d="M808.7,506.6 L805.5,509.8 L808.7,513.0" stroke="#555" stroke-width="0.9" fill="none" />
<path d="M803.2,529.3000000000001 Q798.6,533.6 803.2,537.9" stroke="#555" stroke-width="1.0" fill="none" />
<path d="M808.7,530.4 L805.5,533.6 L808.7,536.8000000000001" stroke="#555" stroke-width="0.9" fill="none" />
<path d="M805.5,439.8 L859.8,439.8 L859.8,533.6 L836.5,533.6" stroke="#777" stroke-width="1" fill="none" />
<path d="M805.5,451.3 L828.3,451.3" stroke="#777" stroke-width="1" fill="none" />
<path d="M805.5,510.1 L828.3,510.1" stroke="#777" stroke-width="1" fill="none" />
<path d="M805.5,533.6 L815.3,533.6" stroke="#777" stroke-width="1" fill="none" />
<path d="M828.3,451.3 L847.9,462.9 L859.8,462.9" stroke="#333" stroke-width="1" fill="none" />
<path d="M828.3,487.3 L847.9,498.2 L859.8,498.2" stroke="#333" stroke-width="1" fill="none" />
<circle cx="828.3" cy="451.3" r="1.7" fill="#111"/>
<circle cx="847.9" cy="462.9" r="1.7" fill="#111"/>
<circle cx="859.8" cy="462.9" r="1.7" fill="#111"/>
<circle cx="825.5" cy="462.9" r="1.7" fill="#111"/>
<circle cx="828.3" cy="474.3" r="1.7" fill="#111"/>
<circle cx="828.3" cy="487.3" r="1.7" fill="#111"/>
<circle cx="847.9" cy="498.2" r="1.7" fill="#111"/>
<circle cx="859.8" cy="498.2" r="1.7" fill="#111"/>
<circle cx="825.5" cy="498.2" r="1.7" fill="#111"/>
<circle cx="828.3" cy="509.8" r="1.7" fill="#111"/>
<line x1="839.7" y1="459" x2="839.7" y2="494" stroke="#333" stroke-width="1.1" stroke-dasharray="4,3"/>
<path d="M831,452.8 L835.5,453.6 L833.6,457.4 Z" fill="#111"/>
<path d="M831,488.6 L835.5,489.2 L833.6,493 Z" fill="#111"/>
<circle cx="825.9" cy="533.7" r="10.6" fill="none" stroke="#333" stroke-width="0.9"/>
<path d="M815.3,533.6 L819.5,533.6 Q819.5,529.3 822.8,529.3 Q826,529.3 826,532.6 Q826,529.3 829.2,529.3 Q832.5,529.3 832.5,533.6 L836.5,533.6" stroke="#444" stroke-width="0.9" fill="none" />
<ellipse cx="826" cy="534.6" rx="1.1" ry="2.4" fill="none" stroke="#666" stroke-width="0.7"/>
<text x="863" y="559.8" text-anchor="end" font-size="7" fill="#434356" >INTERIOR LIFTGATE</text>
<text x="865" y="568.6" text-anchor="end" font-size="7" fill="#434356" >CONTROL SWITCH</text>
<path d="M804.2,599.8000000000001 Q799.6,604.1 804.2,608.4" stroke="#444" stroke-width="1.0" fill="none" />
<path d="M807.8000000000001,599.8000000000001 Q803.2,604.1 807.8000000000001,608.4" stroke="#444" stroke-width="1.0" fill="none" />
<path d="M804.2,634.4000000000001 Q799.6,638.7 804.2,643.0" stroke="#444" stroke-width="1.0" fill="none" />
<path d="M807.8000000000001,634.4000000000001 Q803.2,638.7 807.8000000000001,643.0" stroke="#444" stroke-width="1.0" fill="none" />
<line x1="806" y1="604.1" x2="828.3" y2="604.1" stroke="#222" stroke-width="1.6" />
<line x1="806" y1="638.7" x2="828.3" y2="638.7" stroke="#222" stroke-width="1.6" />
<text x="770.5" y="600.7" text-anchor="start" font-size="7" fill="#434356" >GRY</text>
<text x="792.3" y="600.7" text-anchor="start" font-size="7" fill="#434356" >A</text>
<text x="808.7" y="600.7" text-anchor="start" font-size="7" fill="#434356" >NCA</text>
<text x="754.2" y="635.6" text-anchor="start" font-size="7" fill="#434356" >PPL/WHT</text>
<text x="792.3" y="635.6" text-anchor="start" font-size="7" fill="#434356" >B</text>
<text x="808.7" y="635.6" text-anchor="start" font-size="7" fill="#434356" >NCA</text>
<rect x="828.3" y="596.3" width="37.1" height="48.7" fill="#f4f4fe" stroke="#666" stroke-width="1" />
<path d="M828.3,604.1 L848.4,604.1 L848.4,611.2" stroke="#777" stroke-width="1" fill="none" />
<path d="M828.3,638.7 L859.5,638.7 L859.5,630.8" stroke="#777" stroke-width="1" fill="none" />
<path d="M836.6,630.8 L848.4,611.2" stroke="#333" stroke-width="1" fill="none" />
<path d="M837.8,627.4 L838.6,623 L841.6,625 Z" fill="#111"/>
<circle cx="848.4" cy="611.2" r="1.8" fill="#111"/>
<circle cx="836.6" cy="630.8" r="1.8" fill="#111"/>
<circle cx="859.5" cy="630.8" r="1.8" fill="#111"/>
<text x="864.5" y="653.0" text-anchor="end" font-size="7" fill="#434356" >LIFTGATE</text>
<text x="864.5" y="661.75" text-anchor="end" font-size="7" fill="#434356" >HANDLE</text>
<text x="864.5" y="670.5" text-anchor="end" font-size="7" fill="#434356" >SWITCH</text>
<path d="M719,800 L719,744.7 L793,744.7" stroke="#d88c9c" stroke-width="1.6" fill="none" />
<path d="M792.0,705.3000000000001 Q787.4,709.6 792.0,713.9" stroke="#444" stroke-width="1.0" fill="none" />
<path d="M795.6,705.3000000000001 Q791.0,709.6 795.6,713.9" stroke="#444" stroke-width="1.0" fill="none" />
<path d="M792.0,740.4000000000001 Q787.4,744.7 792.0,749.0" stroke="#444" stroke-width="1.0" fill="none" />
<path d="M795.6,740.4000000000001 Q791.0,744.7 795.6,749.0" stroke="#444" stroke-width="1.0" fill="none" />
<line x1="793" y1="709.6" x2="816.8" y2="709.6" stroke="#222" stroke-width="1.6" />
<line x1="793" y1="744.7" x2="816.8" y2="744.7" stroke="#222" stroke-width="1.6" />
<text x="742.9" y="706.8" text-anchor="start" font-size="7" fill="#434356" >WHT/BLK</text>
<text x="780.8" y="706.8" text-anchor="start" font-size="7" fill="#434356" >A</text>
<text x="797" y="706.8" text-anchor="start" font-size="7" fill="#434356" >NCA</text>
<text x="743.5" y="741.8" text-anchor="start" font-size="7" fill="#434356" >PNK/BLK</text>
<text x="780.8" y="741.8" text-anchor="start" font-size="7" fill="#434356" >B</text>
<text x="797" y="741.8" text-anchor="start" font-size="7" fill="#434356" >NCA</text>
<rect x="816.8" y="702.3" width="48.8" height="47.9" fill="#f4f4fe" stroke="#555" stroke-width="1" />
<path d="M816.8,709.6 L836.6,709.6 L836.6,716.6" stroke="#333" stroke-width="1" fill="none" />
<path d="M836.6,709.6 L859.5,709.6 L859.5,716 L862,718 L857,721 L862,724 L857,727 L862,730 L857,733 L862,736 L859.5,738 L859.5,744.7 L848.2,744.7" stroke="#555" stroke-width="0.9" fill="none" />
<path d="M816.8,744.7 L848.2,744.7 L848.2,736.5" stroke="#333" stroke-width="1" fill="none" />
<path d="M825.3,736.5 L836.6,716.6" stroke="#333" stroke-width="1" fill="none" />
<path d="M826.5,733.2 L827.2,728.8 L830.2,730.8 Z" fill="#111"/>
<circle cx="836.6" cy="709.6" r="1.7" fill="#111"/>
<circle cx="836.6" cy="716.6" r="1.7" fill="#111"/>
<circle cx="825.3" cy="736.5" r="1.7" fill="#111"/>
<circle cx="848.2" cy="736.5" r="1.7" fill="#111"/>
<circle cx="848.2" cy="744.7" r="1.7" fill="#111"/>
<text x="865" y="759.3" text-anchor="end" font-size="7" fill="#434356" >LEFT LIFTGATE</text>
<text x="865" y="767.55" text-anchor="end" font-size="7" fill="#434356" >OBJECT SENSOR</text>
<text x="865" y="775.8" text-anchor="end" font-size="7" fill="#434356" >(LEFT EDGE OF LIFTGATE)</text>
<rect x="0" y="779.6" width="917" height="30" fill="#fff"/>
</svg>
</body></html>
